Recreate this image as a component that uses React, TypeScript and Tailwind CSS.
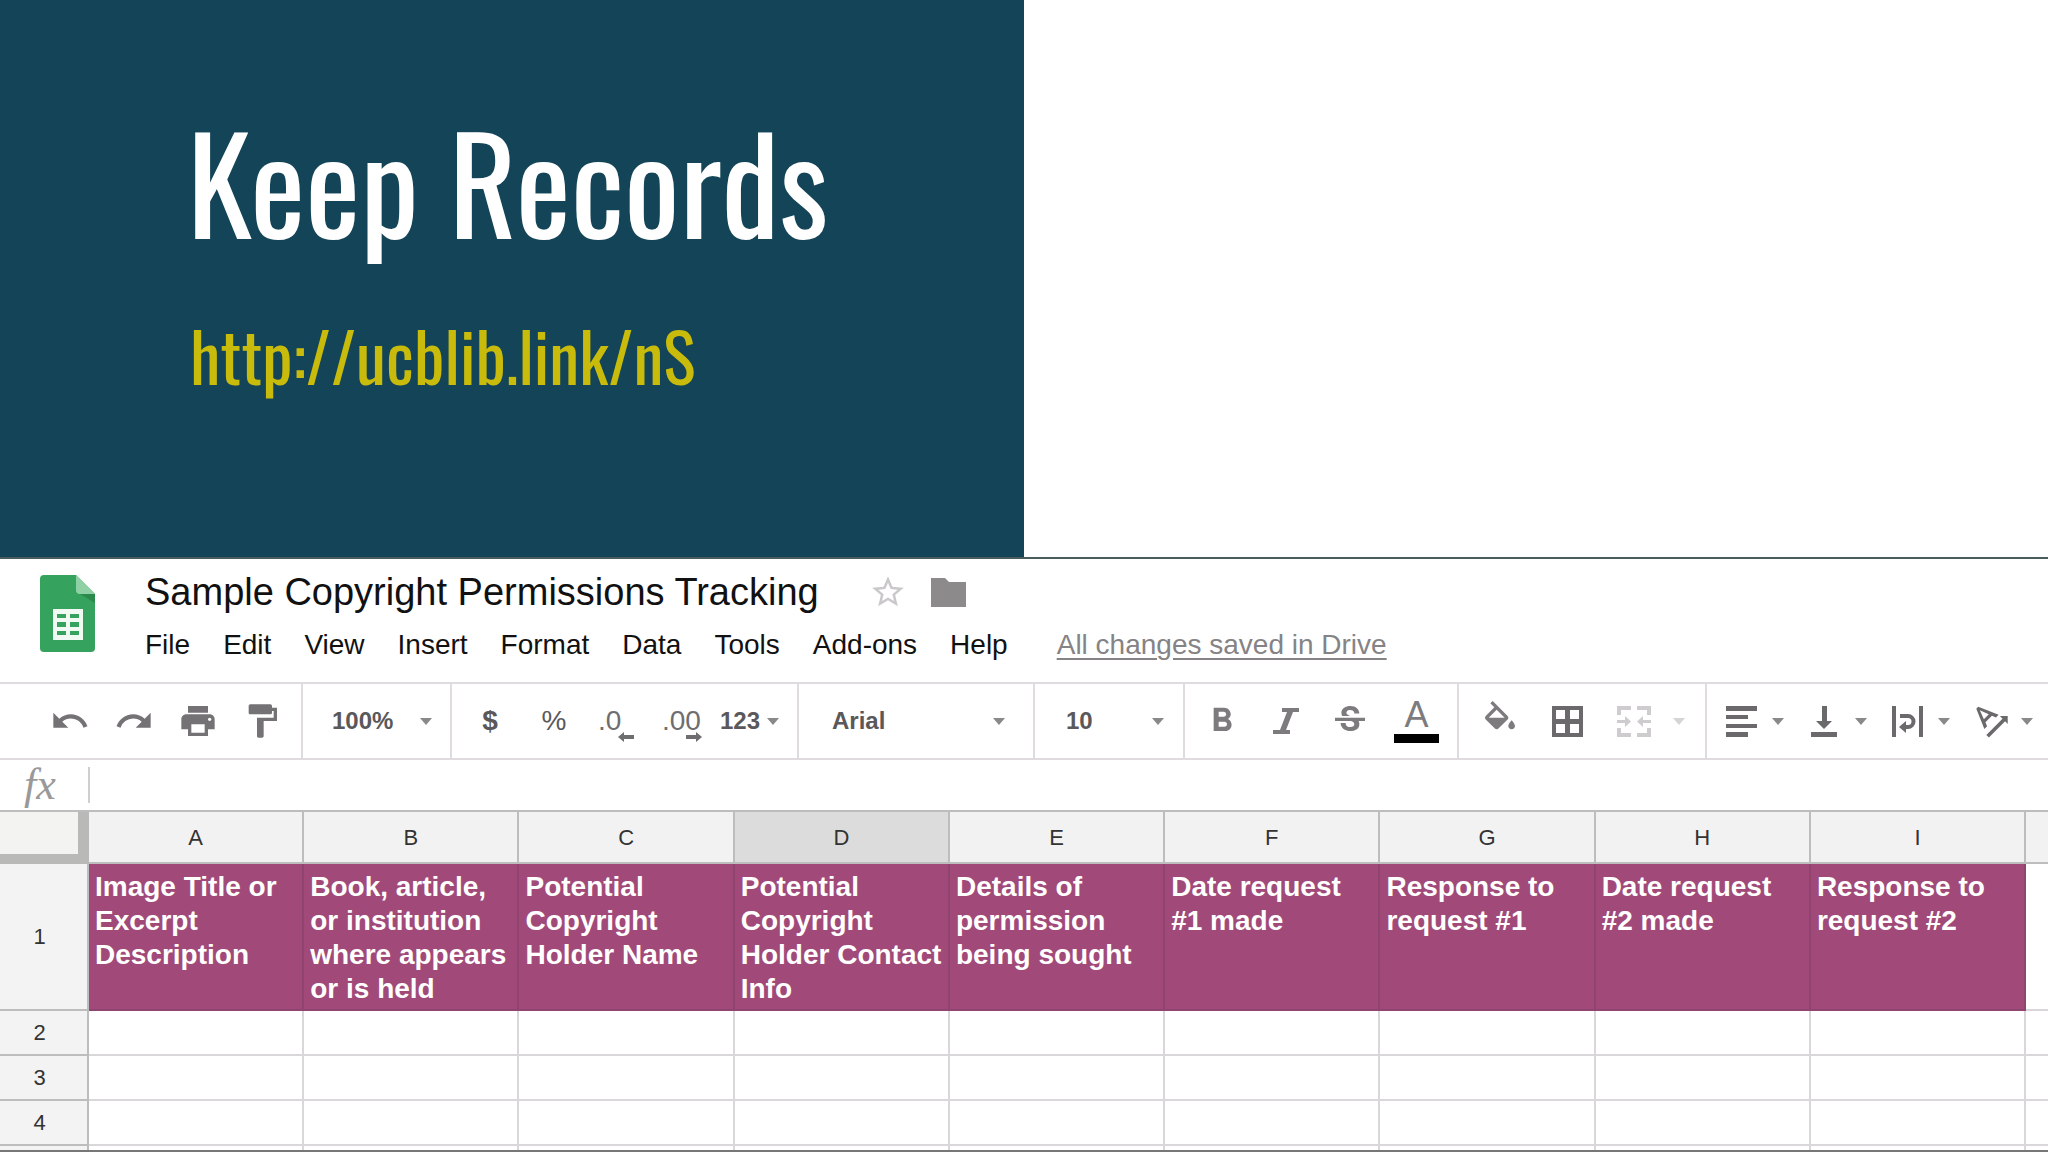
import type { ReactNode } from "react";
import {
  MdBorderAll,
  MdFormatBold,
  MdFormatPaint,
  MdPrint,
  MdRedo,
  MdStarBorder,
  MdStrikethroughS,
  MdTextRotationAngleup,
  MdUndo,
  MdVerticalAlignBottom,
} from "react-icons/md";

const menus = ["File", "Edit", "View", "Insert", "Format", "Data", "Tools", "Add-ons", "Help"];

const columns = [
  { letter: "A", title: "Image Title or Excerpt Description" },
  { letter: "B", title: "Book, article, or institution where appears or is held" },
  { letter: "C", title: "Potential Copyright Holder Name" },
  { letter: "D", title: "Potential Copyright Holder Contact Info" },
  { letter: "E", title: "Details of permission being sought" },
  { letter: "F", title: "Date request #1 made" },
  { letter: "G", title: "Response to request #1" },
  { letter: "H", title: "Date request #2 made" },
  { letter: "I", title: "Response to request #2" },
];

const selectedColumn = "D";
const emptyRows = ["2", "3", "4", ""];

const rowHeadClass =
  "border-b-2 border-r-2 border-[#bdbdbd] bg-[#f3f3f3] pr-2 text-center text-[22px] font-normal text-[#333]";

function Caret({ className = "text-[#8a888a]" }: { className?: string }) {
  return (
    <svg viewBox="0 0 12 7" className={`h-[7px] w-3 shrink-0 ${className}`} fill="currentColor" aria-hidden="true">
      <path d="M0 0h12L6 7z" />
    </svg>
  );
}

function ToolGroup({ className = "", children }: { className?: string; children: ReactNode }) {
  return <div className={`flex shrink-0 items-center border-[#dfdbdf] ${className}`}>{children}</div>;
}

function ToolButton({ label, className = "w-10", children }: { label: string; className?: string; children: ReactNode }) {
  return (
    <button type="button" aria-label={label} className={`flex h-10 shrink-0 items-center justify-center ${className}`}>
      {children}
    </button>
  );
}

function ToolSelect({ label, value, className }: { label: string; value: string; className: string }) {
  return (
    <label className={`flex shrink-0 items-center border-r-2 border-[#dfdbdf] ${className}`}>
      <select aria-label={label} className="min-w-0 flex-1 appearance-none bg-transparent text-2xl font-bold outline-none">
        <option>{value}</option>
      </select>
      <Caret />
    </label>
  );
}

function SheetsLogo() {
  return (
    <svg viewBox="0 0 55 77" className="h-[77px] w-[55px] shrink-0" aria-hidden="true">
      <path d="M4 0h32l19 19v54a4 4 0 0 1-4 4H4a4 4 0 0 1-4-4V4a4 4 0 0 1 4-4z" fill="#35a35d" />
      <path d="M36 0l19 19H40a4 4 0 0 1-4-4z" fill="#8fd0a5" />
      <path d="M40 19h15v9z" fill="#2a8a4c" />
      <path
        d="M13 34h30v31H13zM17 39v4h9v-4zM30 39v4h9v-4zM17 47v5h9v-5zM30 47v5h9v-5zM17 56v4h9v-4zM30 56v4h9v-4z"
        fill="#f1faf2"
        fillRule="evenodd"
      />
    </svg>
  );
}

function DecimalIcon({ digits, direction }: { digits: string; direction: "left" | "right" }) {
  return (
    <span className="relative w-full text-left text-[28px] leading-10 text-[#6f6d6f]">
      {digits}
      <svg
        viewBox="0 0 16 10"
        className={`absolute -bottom-px h-2.5 w-4 ${direction === "left" ? "left-5" : "right-0"}`}
        fill="currentColor"
        aria-hidden="true"
      >
        <path d={direction === "left" ? "M0 5l6-5v3h10v4H6v3z" : "M16 5l-6-5v3H0v4h10v3z"} />
      </svg>
    </span>
  );
}

function Hero() {
  return (
    <header className="h-[557px] w-1/2 shrink-0 bg-[#134457] pl-[187px] font-['Oswald','Liberation_Sans_Narrow','Roboto_Condensed',sans-serif]">
      <h1 className="pt-[105px] text-[131px] leading-[150px] whitespace-nowrap text-white">Keep Records</h1>
      <a href="http://ucblib.link/nS" className="mt-[50px] block pl-[3px] text-[68px] leading-[100px] text-[#c9bb0b]">
        http://ucblib.link/nS
      </a>
    </header>
  );
}

function TitleBar() {
  return (
    <div className="flex h-[123px] items-start pt-4 pl-10">
      <SheetsLogo />
      <div className="-mt-[5px] pl-[50px]">
        <div className="flex h-11 items-center">
          <h2 className="text-[38px] leading-11 whitespace-nowrap text-[#111]">Sample Copyright Permissions Tracking</h2>
          <button type="button" aria-label="Star" className="ml-[50px] text-[#cbc8cb]">
            <MdStarBorder size={38} />
          </button>
          <button type="button" aria-label="Move to folder" className="ml-6 text-[#8d8a8b]">
            <svg viewBox="0 0 35 29" className="h-[29px] w-[35px]" fill="currentColor" aria-hidden="true">
              <path d="M0 0h14l4 4h17v25H0z" />
            </svg>
          </button>
        </div>
        <nav className="flex items-center gap-[33px] pt-[13px] text-[28px] leading-9 whitespace-nowrap text-[#111]">
          {menus.map((menu) => (
            <button key={menu} type="button">
              {menu}
            </button>
          ))}
          <a href="#history" className="ml-4 text-[#858385] underline underline-offset-4">
            All changes saved in Drive
          </a>
        </nav>
      </div>
    </div>
  );
}

function Toolbar() {
  return (
    <div className="flex h-[78px] overflow-hidden border-y-2 border-[#dfdbdf] text-[#5a585a]">
      <ToolGroup className="w-[303px] gap-6 border-r-2 pl-[50px] text-[#757275]">
        <ToolButton label="Undo">
          <MdUndo size={40} />
        </ToolButton>
        <ToolButton label="Redo">
          <MdRedo size={40} />
        </ToolButton>
        <ToolButton label="Print">
          <MdPrint size={40} />
        </ToolButton>
        <ToolButton label="Paint format">
          <MdFormatPaint size={40} />
        </ToolButton>
      </ToolGroup>

      <ToolSelect label="Zoom" value="100%" className="w-[149px] pr-[18px] pl-[29px]" />

      <ToolGroup className="w-[347px] gap-6 border-r-2 pl-[18px] text-[28px]">
        <ToolButton label="Format as currency">
          <span className="font-bold">$</span>
        </ToolButton>
        <ToolButton label="Format as percent">%</ToolButton>
        <ToolButton label="Decrease decimal places">
          <DecimalIcon digits=".0" direction="left" />
        </ToolButton>
        <ToolButton label="Increase decimal places">
          <DecimalIcon digits=".00" direction="right" />
        </ToolButton>
        <ToolButton label="More formats" className="-ml-1.5 gap-[7px] text-2xl font-bold">
          123
          <Caret />
        </ToolButton>
      </ToolGroup>

      <ToolSelect label="Font" value="Arial" className="w-[236px] pr-[28px] pl-[33px]" />
      <ToolSelect label="Font size" value="10" className="w-[150px] pr-[19px] pl-[31px]" />

      <ToolGroup className="w-[274px] gap-6 border-r-2 pl-[17px] text-[#7d7b7d]">
        <ToolButton label="Bold">
          <MdFormatBold size={46} />
        </ToolButton>
        <ToolButton label="Italic">
          <svg viewBox="0 0 26 26" className="size-[26px]" fill="currentColor" aria-hidden="true">
            <path d="M9 0h17v4h-6l-7 18h4v4H0v-4h7l7-18H9z" />
          </svg>
        </ToolButton>
        <ToolButton label="Strikethrough">
          <MdStrikethroughS size={42} />
        </ToolButton>
        <ToolButton label="Text color" className="w-[45px] flex-col gap-[3px]">
          <span className="text-4xl leading-8">A</span>
          <span className="h-[9px] w-full shrink-0 bg-black" />
        </ToolButton>
      </ToolGroup>

      <ToolGroup className="w-[248px] gap-[27px] border-r-2 pl-[21px] text-[#7d7b7d]">
        <ToolButton label="Fill color">
          <svg viewBox="0 0 24 24" className="size-10" fill="currentColor" aria-hidden="true">
            <path d="M16.56 8.94L7.62 0 6.21 1.41l2.38 2.38-5.15 5.15a1.49 1.49 0 0 0 0 2.12l5.5 5.5c.29.29.68.44 1.06.44s.77-.15 1.06-.44l5.5-5.5c.59-.58.59-1.53 0-2.12zM5.21 10L10 5.21 14.79 10H5.21zM19 11.5s-2 2.17-2 3.5c0 1.1.9 2 2 2s2-.9 2-2c0-1.33-2-3.5-2-3.5z" />
          </svg>
        </ToolButton>
        <ToolButton label="Borders">
          <svg viewBox="0 0 31 31" className="size-[31px] text-[#6b696b]" fill="currentColor" aria-hidden="true">
            <path d="M0 0h31v31H0zM4 4v9h9V4zM18 4v9h9V4zM4 18v9h9v-9zM18 18v9h9v-9z" fillRule="evenodd" />
          </svg>
        </ToolButton>
        <ToolButton label="Merge cells" className="gap-[22px] text-[#cfccd0]">
          <svg viewBox="0 0 34 31" className="ml-[3px] h-[31px] w-[34px]" fill="currentColor" aria-hidden="true">
            <path d="M0 0h14v4H4v5H0zM34 0H20v4h10v5h4zM0 31h14v-4H4v-5H0zM34 31H20v-4h10v-5h4zM0 14h8v-4l6 5.500-6 5.500v-4H0zM34 14h-8v-4l-6 5.500 6 5.500v-4h8z" />
          </svg>
          <Caret className="text-[#d6d4d6]" />
        </ToolButton>
      </ToolGroup>

      <ToolGroup className="gap-5 pl-[14px] text-[#6b696b]">
        <ToolButton label="Horizontal align" className="gap-[11px]">
          <span className="flex w-10 justify-center">
            <svg viewBox="0 0 31 31" className="size-[31px]" fill="currentColor" aria-hidden="true">
              <path d="M0 0h31v5H0zM0 9h22v4H0zM0 18h31v4H0zM0 26h22v5H0z" />
            </svg>
          </span>
          <Caret />
        </ToolButton>
        <ToolButton label="Vertical align" className="gap-[11px]">
          <span className="flex w-10 justify-center">
            <svg viewBox="0 0 26 31" className="h-[31px] w-[26px]" fill="currentColor" aria-hidden="true">
              <path d="M11 0h5v15h5l-8 8-8-8h6zM0 26h26v5H0z" />
            </svg>
          </span>
          <Caret />
        </ToolButton>
        <ToolButton label="Text wrapping" className="gap-[11px]">
          <span className="flex w-10 justify-center">
            <svg viewBox="0 0 31 31" className="size-[31px]" fill="currentColor" aria-hidden="true">
              <path d="M0 0h4v31H0zM27 0h4v31h-4z" />
              <path d="M8 10h8a5.500 5.500 0 0 1 0 11h-3" fill="none" stroke="currentColor" strokeWidth="4" />
              <path d="M7 21l7-6v12z" />
            </svg>
          </span>
          <Caret />
        </ToolButton>
        <ToolButton label="Text rotation" className="gap-[7px]">
          <MdTextRotationAngleup size={44} />
          <Caret />
        </ToolButton>
      </ToolGroup>
    </div>
  );
}

function FormulaBar() {
  return (
    <div className="flex h-[50px] items-center">
      <label
        htmlFor="formula"
        className="w-[88px] shrink-0 pl-6 font-['Liberation_Serif',serif] text-[44px] leading-10 text-[#999] italic"
      >
        fx
      </label>
      <input id="formula" type="text" className="h-9 flex-1 border-l-2 border-[#cfcfcf] px-2 text-2xl outline-none" />
    </div>
  );
}

function Grid() {
  return (
    <table className="w-full table-fixed border-separate border-spacing-0 border-t-2 border-[#bdbdbd]">
      <colgroup>
        <col className="w-[89px]" />
        {columns.map((column) => (
          <col key={column.letter} className="w-[10.51%]" />
        ))}
        <col />
      </colgroup>
      <thead>
        <tr className="h-[52px]">
          <td className="border-r-[11px] border-b-[10px] border-[#b9b9b7] bg-[#f3f3f2]" />
          {columns.map((column) => (
            <th
              key={column.letter}
              scope="col"
              className={`border-r-2 border-b-2 border-[#bdbdbd] text-[22px] font-normal text-[#333] ${
                column.letter === selectedColumn ? "bg-[#dcdcdc]" : "bg-[#f3f2f3]"
              }`}
            >
              {column.letter}
            </th>
          ))}
          <td className="border-b-2 border-[#bdbdbd] bg-[#f3f2f3]" />
        </tr>
      </thead>
      <tbody>
        <tr className="h-[147px]">
          <th scope="row" className={rowHeadClass}>
            1
          </th>
          {columns.map((column) => (
            <td
              key={column.letter}
              className="border-r-2 border-b-2 border-[#8f4570] bg-[#a14a79] pt-1.5 pl-1.5 align-top text-[28px] leading-[34px] font-bold text-white"
            >
              {column.title}
            </td>
          ))}
          <td className="border-b-2 border-[#d9d7da]" />
        </tr>
        {emptyRows.map((row) => (
          <tr key={row} className="h-[45px]">
            <th scope="row" className={rowHeadClass}>
              {row}
            </th>
            {columns.map((column) => (
              <td key={column.letter} className="border-r-2 border-b-2 border-[#d9d7da]" />
            ))}
            <td className="border-b-2 border-[#d9d7da]" />
          </tr>
        ))}
      </tbody>
    </table>
  );
}

export default function App() {
  return (
    <div className="flex h-screen flex-col overflow-hidden bg-white font-['Liberation_Sans',Arial,sans-serif]">
      <Hero />
      <main className="min-h-0 flex-1 overflow-hidden border-t-2 border-b-2 border-t-[#4b5c5c] border-b-[#777]">
        <TitleBar />
        <Toolbar />
        <FormulaBar />
        <Grid />
      </main>
    </div>
  );
}
